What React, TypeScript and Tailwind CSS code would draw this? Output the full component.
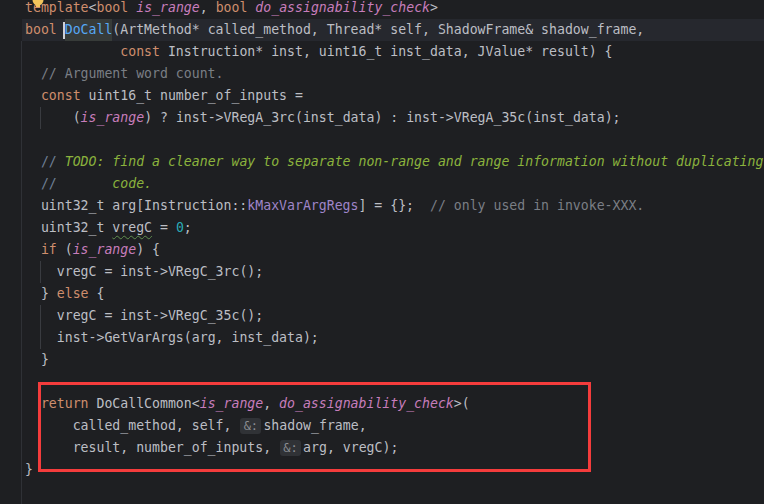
import React from "react";

type Tok = [string, string?];

const kw = "text-[#cf8e6d]";
const pr = "text-[#c77dbb] italic";
const cm = "text-[#7a7e85]";
const sl = "text-[#6f7f95]";
const todo = "text-[#8bb33d] italic";
const num = "text-[#2aacb8]";
const cst = "text-[#9f85c9]";

// special token kinds
const GUIDE = "guide";
const INLAY = "inlay";
const CARET = "caret";
const FN = "fn";
const WARN = "warn";

const lines: Tok[][] = [
  [["template", kw], ["<"], ["bool", kw], [" "], ["is_range", pr], [", "], ["bool", kw], [" "], ["do_assignability_check", pr], [">"]],
  [["bool", kw], [" "], ["", CARET], ["DoCall", FN], ["(ArtMethod* called_method, Thread* self, ShadowFrame& shadow_frame,"]],
  [["            "], ["const", kw], [" Instruction* inst, uint16_t inst_data, JValue* result) {"]],
  [["  "], ["// Argument word count.", cm]],
  [["  "], ["const", kw], [" uint16_t number_of_inputs ="]],
  [["  "], ["    ", GUIDE], ["("], ["is_range", pr], [") ? inst->VRegA_3rc(inst_data) : inst->VRegA_35c(inst_data);"]],
  [],
  [["  "], ["// ", sl], ["TODO: find a cleaner way to separate non-range and range information without duplicating", todo]],
  [["  "], ["//", sl], ["       code.", todo]],
  [["  uint32_t arg[Instruction::"], ["kMaxVarArgRegs", cst], ["] = {};  "], ["// only used in invoke-XXX.", cm]],
  [["  uint32_t "], ["vregC", WARN], [" = "], ["0", num], [";"]],
  [["  "], ["if", kw], [" ("], ["is_range", pr], [") {"]],
  [["  "], ["  ", GUIDE], ["vregC = inst->VRegC_3rc();"]],
  [["  } "], ["else", kw], [" {"]],
  [["  "], ["  ", GUIDE], ["vregC = inst->VRegC_35c();"]],
  [["  "], ["  ", GUIDE], ["inst->GetVarArgs(arg, inst_data);"]],
  [["  }"]],
  [],
  [["  "], ["return", kw], [" DoCallCommon<"], ["is_range", pr], [", "], ["do_assignability_check", pr], [">("]],
  [["      called_method, self, "], ["&:", INLAY], ["shadow_frame,"]],
  [["      result, number_of_inputs, "], ["&:", INLAY], ["arg, vregC);"]],
  [["}"]],
];

const Token = ({ t }: { t: Tok }) => {
  const [text, cls] = t;
  if (cls === GUIDE)
    return <span className="self-stretch -ml-px pl-px shadow-[inset_1px_0_0_#393b40]">{text}</span>;
  if (cls === CARET)
    return <span className="-ml-[2px] w-[2px] h-[17px] bg-[#ced0d6]" />;
  if (cls === FN)
    return <span className="self-stretch leading-[22px] bg-[#373b39] text-[#56a8f5]">{text}</span>;
  if (cls === WARN)
    return (
      <span className="underline decoration-wavy decoration-[#5f8f4e] decoration-1 underline-offset-[3px]">
        {text}
      </span>
    );
  if (cls === INLAY)
    return (
      <span className="ml-px mr-[2px] w-[21px] h-[16px] rounded-[3px] bg-[#303236] text-[#8c8f94] text-[12px] leading-[16px] text-center">
        {text}
      </span>
    );
  return <span className={cls}>{text}</span>;
};

export default function App() {
  return (
    <div className="relative w-[764px] h-[504px] overflow-hidden bg-[#1e1f22] text-[#bcbec4] font-['DejaVu_Sans_Mono',monospace] text-[13.2px]">
      <div className="flex h-full">
        <div className="w-[21px] shrink-0" />
        <div className="w-px shrink-0 mt-[41px] bg-[#2f3136]" />
        <div className="flex-1 min-w-0 -mt-[3px]">
          {lines.map((toks, i) => (
            <div
              key={i}
              className={`flex items-center h-[22px] leading-[22px] whitespace-pre pl-[3px] ${
                i === 1 ? "bg-[#26282e]" : ""
              }`}
            >
              {toks.map((t, j) => (
                <Token key={j} t={t} />
              ))}
            </div>
          ))}
        </div>
      </div>

      {/* intention bulb, cut by the top edge */}
      <svg className="absolute left-[32px] top-0" width="12" height="8" viewBox="0 0 12 8">
        <circle cx="6" cy="0" r="5.5" fill="#f2c55c" />
        <rect x="4" y="5" width="4" height="2" fill="#f2c55c" />
      </svg>

      {/* annotation box */}
      <div className="absolute left-[38px] top-[382px] w-[553px] h-[90px] border-[3px] border-[#f43c3c]" />
    </div>
  );
}
